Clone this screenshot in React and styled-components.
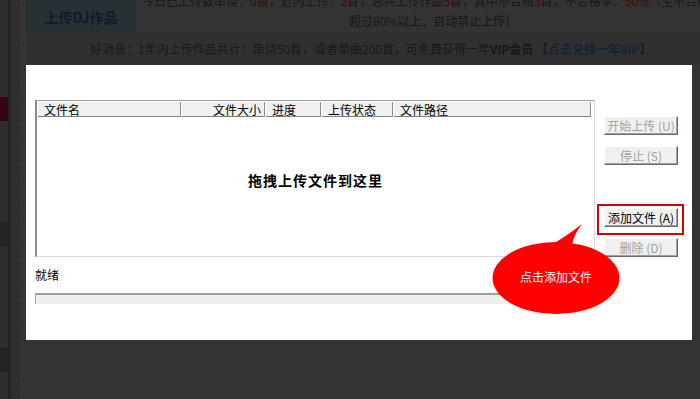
import React from "react";
import styled, { createGlobalStyle } from "styled-components";

const GlobalStyle = createGlobalStyle`
  html, body { margin: 0; padding: 0; background: #333333; }
  body { font-family: "Noto Sans CJK SC", "Noto Sans", sans-serif; font-size: 12px; }
`;

const Frame = styled.div`
  position: relative;
  width: 700px;
  height: 399px;
  overflow: hidden;
  background: #333333;
  display: flex;
`;

const LeftRail = styled.div`
  flex: none;
  width: 26px;
  display: flex;
`;

const RailBar = styled.div`
  width: 8px;
  background: #2e2e2e;
  display: flex;
  flex-direction: column;
`;

const RailMark = styled.div`
  margin-top: ${(p) => p.$top}px;
  height: ${(p) => p.$h}px;
  background: ${(p) => p.$c};
`;

const RailGroove = styled.div`
  width: 3px;
  background: #222222;
`;

const RailInner = styled.div`
  width: 8px;
  background: #2f2f2f;
`;

const RailDash = styled.div`
  width: 7px;
  border-left: 1px dashed #242424;
  background: #333333;
`;

const Main = styled.div`
  flex: 1;
  display: flex;
  flex-direction: column;
  min-width: 0;
`;

const TopRow = styled.div`
  height: 33px;
  display: flex;
`;

const Tab = styled.div`
  flex: none;
  width: 110px;
  background: #283034;
  border-right: 1px solid #2c3437;
  display: flex;
  align-items: center;
  justify-content: center;
  font-size: 14px;
  font-weight: bold;
  color: #0e1c28;
`;

const Notice = styled.div`
  flex: 1;
  margin-top: -9px;
  padding-left: 5px;
  color: #161616;
  font-size: 12px;
  line-height: 20px;
  white-space: nowrap;
`;

const NoticeLine = styled.div`
  padding-left: ${(p) => p.$indent || 0}px;
`;

const Red = styled.span`
  color: #440404;
`;

const GoodNews = styled.div`
  height: 32px;
  line-height: 32px;
  padding-left: 64px;
  background: #303030;
  color: #181818;
  font-size: 12px;
  white-space: nowrap;
`;

const Strong = styled.span`
  font-weight: bold;
  color: #161616;
`;

const LinkText = styled.span`
  color: #152330;
  font-weight: bold;
`;

const Modal = styled.div`
  position: absolute;
  left: 26px;
  top: 65px;
  width: 666px;
  height: 275px;
  background: #ffffff;
  box-sizing: border-box;
  padding: 35px 0 0 9px;
  display: flex;
`;

const ListColumn = styled.div`
  width: 560px;
  flex: none;
  display: flex;
  flex-direction: column;
`;

const ListBox = styled.div`
  height: 157px;
  box-sizing: border-box;
  border-top: 1px solid #a0a0a0;
  border-left: 2px solid #8a8a8a;
  border-right: 1px solid #dcdcdc;
  border-bottom: 1px solid #dcdcdc;
  display: flex;
  flex-direction: column;
`;

const HeaderRow = styled.div`
  height: 16px;
  margin-right: 3px;
  display: grid;
  grid-template-columns: 144px 84px 56px 72px 1fr;
  background: #f0f0f0;
  border-top: 1px solid #ffffff;
  border-bottom: 1px solid #808080;
  box-sizing: border-box;
`;

const HeaderCell = styled.div`
  box-sizing: border-box;
  height: 15px;
  line-height: 15px;
  padding: 0 ${(p) => (p.$right ? 3 : 0)}px 0 ${(p) => (p.$right ? 0 : 6)}px;
  text-align: ${(p) => (p.$right ? "right" : "left")};
  border-left: 1px solid #ffffff;
  border-right: 1px solid #8c8c8c;
  color: #000;
  font-size: 12px;
  white-space: nowrap;
  overflow: hidden;
`;

const DropZone = styled.div`
  flex: 1;
  display: flex;
  align-items: center;
  justify-content: center;
  padding-bottom: 14px;
  font-size: 14px;
  font-weight: bold;
  letter-spacing: 1px;
  color: #000;
`;

const Status = styled.div`
  margin-top: 10px;
  height: 16px;
  line-height: 16px;
  font-size: 12px;
  color: #000;
`;

const ProgressBar = styled.div`
  margin-top: 10px;
  width: 555px;
  height: 11px;
  box-sizing: border-box;
  background: #eeeeee;
  border-top: 2px solid #a0a0a0;
  border-left: 1px solid #a0a0a0;
`;

const ButtonColumn = styled.div`
  margin-left: 9px;
  padding-top: 16px;
  display: flex;
  flex-direction: column;
`;

const Button = styled.button`
  width: 74px;
  height: 19px;
  margin-top: ${(p) => p.$gap || 0}px;
  padding: 0;
  box-sizing: border-box;
  background: #f0f0f0;
  border: 1px solid;
  border-color: #ffffff #6a6a6a #6a6a6a #ffffff;
  box-shadow: inset -1px -1px 0 #a0a0a0;
  font-family: "Noto Sans CJK SC", "Noto Sans", sans-serif;
  font-size: 12px;
  line-height: 16px;
  color: ${(p) => (p.$active ? "#000000" : "#a0a0a0")};
  cursor: default;
`;

const Highlight = styled.div`
  position: relative;
  margin-top: ${(p) => p.$gap || 0}px;
  &::after {
    content: "";
    position: absolute;
    left: -7px;
    top: -4px;
    right: -6px;
    bottom: -8px;
    border: 2px solid #d40000;
    pointer-events: none;
  }
`;

const Balloon = styled.div`
  position: absolute;
  left: 464px;
  top: 157px;
  width: 132px;
  height: 94px;
`;

const BalloonText = styled.div`
  position: absolute;
  left: 0;
  right: 0;
  top: 47px;
  text-align: center;
  color: #ffffff;
  font-size: 12px;
  line-height: 16px;
`;

export default function App() {
  return (
    <>
      <GlobalStyle />
      <Frame>
        <LeftRail>
          <RailBar>
            <RailMark $top={97} $h={24} $c="#340614" />
            <RailMark $top={101} $h={25} $c="#242424" />
            <RailMark $top={100} $h={25} $c="#242424" />
          </RailBar>
          <RailGroove />
          <RailInner />
          <RailDash />
        </LeftRail>
        <Main>
          <TopRow>
            <Tab>上传DJ作品</Tab>
            <Notice>
              <NoticeLine>
                今日已上传数串烧：<Red>0首</Red>，近内上传：<Red>2首</Red>
                ，总共上传作品<Red>5首</Red>，其中不合格<Red>3首</Red>，不合格率：
                <Red>50%</Red>（至不合格
              </NoticeLine>
              <NoticeLine $indent={207}>超过80%以上，自动禁止上传）</NoticeLine>
            </Notice>
          </TopRow>
          <GoodNews>
            好消息：1年内上传作品共计：串烧50首，或者单曲200首，可免费获得一年
            <Strong>VIP会员</Strong> 【<LinkText>点击兑换一年VIP</LinkText>】
          </GoodNews>
        </Main>

        <Modal>
          <ListColumn>
            <ListBox>
              <HeaderRow>
                <HeaderCell>文件名</HeaderCell>
                <HeaderCell $right>文件大小</HeaderCell>
                <HeaderCell>进度</HeaderCell>
                <HeaderCell>上传状态</HeaderCell>
                <HeaderCell>文件路径</HeaderCell>
              </HeaderRow>
              <DropZone>拖拽上传文件到这里</DropZone>
            </ListBox>
            <Status>就绪</Status>
            <ProgressBar />
          </ListColumn>
          <ButtonColumn>
            <Button>开始上传 (U)</Button>
            <Button $gap={11}>停止 (S)</Button>
            <Highlight $gap={43}>
              <Button $active>添加文件 (A)</Button>
            </Highlight>
            <Button $gap={11}>删除 (D)</Button>
          </ButtonColumn>
          <Balloon>
            <svg width="132" height="160" viewBox="0 0 132 160">
              <path
                d="M56 26 C70 18 82 10 92 2 C86 10 82 18 82 26 Z"
                fill="#ff0000"
              />
              <ellipse cx="66" cy="56" rx="63.5" ry="36" fill="#ff0000" />
            </svg>
            <BalloonText>点击添加文件</BalloonText>
          </Balloon>
        </Modal>
      </Frame>
    </>
  );
}
